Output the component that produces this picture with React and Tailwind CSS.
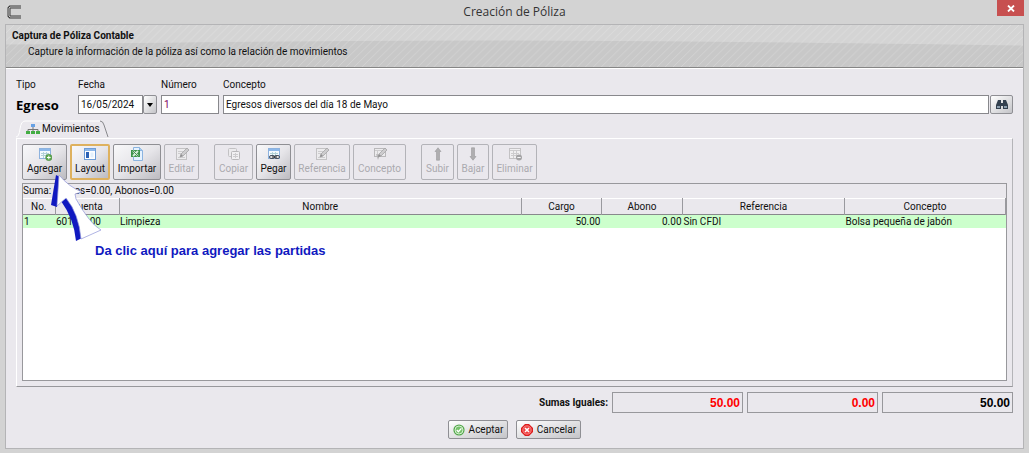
import { clsx } from 'clsx';

const COLUMNS = [
    { name: 'No.', width: 'w-[32px]' },
    { name: 'Cuenta', width: 'w-[64px]' },
    { name: 'Nombre', width: '' },
    { name: 'Cargo', width: 'w-[80px]', right: true },
    { name: 'Abono', width: 'w-[81px]', right: true },
    { name: 'Referencia', width: 'w-[162px]' },
    { name: 'Concepto', width: 'w-[161px]' },
];

const ROWS = [['1', '601-00-00', 'Limpieza', '50.00', '0.00', 'Sin CFDI', 'Bolsa pequeña de jabón']];

function SheetShape() {
    return (
        <>
            <rect x="1.5" y="1.5" width="11" height="10" fill="#f4faff" stroke="#8db2de" />
            <path d="M2 2h10v2H2z" fill="#8db8ea" />
            <path d="M3 6.5h8M3 8.5h8M5.5 5v6M8.5 5v6" stroke="#b3d3d8" />
        </>
    );
}

function PencilShape() {
    return (
        <>
            <path d="M5 10l1-3 6-6 2 2-6 6z" fill="#bbb" stroke="#777" strokeWidth=".8" />
            <path d="M5 10l1-3 2 2z" fill="#555" />
        </>
    );
}

function ToolIcon({ name }) {
    const shapes = {
        add: (
            <>
                <SheetShape />
                <circle cx="10.8" cy="10.5" r="3.2" fill="#5da84f" stroke="#4c8a44" strokeWidth=".5" />
                <path d="M9 10.5h3.6M10.8 8.7v3.6" stroke="#fff" />
            </>
        ),
        layout: (
            <>
                <rect x="1.5" y="1.5" width="11" height="11" fill="#fff" stroke="#6f9dd6" />
                <path d="M2 2h10v2H2z" fill="#8db8ea" />
                <path d="M3 5h3v6H3z" fill="#2d62b5" />
                <path d="M7.5 5.5h3v5h-3z" fill="#e3f0fd" />
            </>
        ),
        excel: (
            <>
                <path d="M3.5.5h6l3 3v10h-9z" fill="#e5f2ff" stroke="#8bb4e0" />
                <path d="M9.5.5v3h3" fill="#a6caef" stroke="#8bb4e0" />
                <path d="M1 3h9v7H1z" fill="#3f944c" />
                <path d="M3 4l5 5M8 4L3 9" stroke="#d9f0dc" strokeWidth="1.8" />
                <path d="M3 4l5 5" stroke="#24752f" strokeWidth=".8" />
            </>
        ),
        edit: (
            <>
                <rect x="1.5" y="1.5" width="10" height="11" fill="#eee" stroke="#aaa" />
                <path d="M3 4.5h5M3 6.5h4M3 10.5h7" stroke="#bbb" />
                <PencilShape />
            </>
        ),
        copy: (
            <>
                <rect x="1.5" y="1.5" width="8" height="8" rx="1" fill="#eee" stroke="#aaa" />
                <rect x="4.5" y="4.5" width="8" height="8" rx="1" fill="#f6f6f6" stroke="#999" />
                <path d="M6 7.5h5M6 9.5h5M8.5 6v5" stroke="#bbb" />
            </>
        ),
        paste: (
            <>
                <SheetShape />
                <rect x="2.5" y="8.5" width="5" height="3" rx="1.5" fill="#ddd" stroke="#465263" />
                <rect x="7.5" y="8.5" width="5" height="3" rx="1.5" fill="#ddd" stroke="#465263" />
                <path d="M5 10h5" stroke="#222" />
            </>
        ),
        concept: (
            <>
                <rect x="1.5" y="1.5" width="11" height="8" fill="#eee" stroke="#999" />
                <path d="M2 3.5h10M4.5 3v6" stroke="#bbb" />
                <path d="M3 7l2 6 2-5z" fill="#999" />
                <PencilShape />
            </>
        ),
        up: <path d="M7 .8l3 3.7H8.5v8.7h-3V4.5H4z" fill="#888" stroke="#666" strokeWidth=".6" />,
        down: <path d="M7 13.2l3-3.7H8.5V.8h-3v8.7H4z" fill="#888" stroke="#666" strokeWidth=".6" />,
        remove: (
            <>
                <rect x="1.5" y="1.5" width="11" height="10" fill="#f5f5f5" stroke="#aaa" />
                <path d="M2 3.5h10M3 6.5h8M3 8.5h8M5.5 4v7M8.5 4v7" stroke="#bbb" />
                <circle cx="11" cy="10.5" r="3" fill="#777" />
                <path d="M9.3 10.5h3.4" stroke="#fff" />
            </>
        ),
    };
    return (
        <svg viewBox="0 0 14 14" className="size-3.5" aria-hidden="true">
            {shapes[name]}
        </svg>
    );
}

function ToolButton({ icon, label, width, active, disabled }) {
    return (
        <button
            type="button"
            disabled={disabled}
            className={clsx(
                'flex h-9 shrink-0 flex-col items-center justify-between rounded-[2px] border',
                width,
                disabled && 'border-[#b3b3b8] py-0.5 text-[#aaaaaf]',
                !disabled && 'bg-linear-to-br from-[#f8f8fa] via-[#e6e5e9] to-[#bcbbc0]',
                !disabled && (active ? 'border-2 border-[#deb15e] py-px' : 'border-[#8f8f94] py-0.5')
            )}
        >
            <span className={clsx('h-3.5', disabled && 'opacity-60')}>
                <ToolIcon name={icon} />
            </span>
            <span className="leading-4">{label}</span>
        </button>
    );
}

function Field({ id, label, width, value, className }) {
    return (
        <div className={clsx('flex flex-col gap-0.5', width)}>
            <label htmlFor={id} className="leading-4">{label}</label>
            <input
                id={id}
                defaultValue={value}
                className={clsx('h-[19px] w-full border border-[#88888c] bg-white px-0.5 outline-none', className)}
            />
        </div>
    );
}

function Total({ label, value, className }) {
    return (
        <output
            aria-label={label}
            className={clsx(
                'flex h-[21px] w-[131px] items-center justify-end border border-[#98989c] px-0.5 font-["Liberation_Sans"] text-[12px] font-bold',
                className
            )}
        >
            {value}
        </output>
    );
}

function TitleBar() {
    return (
        <header className="flex h-6 items-start px-[5px]">
            <div className="w-[27px] pt-[5px] pl-0.5">
                <svg viewBox="0 0 15 14" className="h-3.5 w-[15px]" aria-hidden="true">
                    <path d="M14 2H3L2 3v8l1 1h11" fill="none" stroke="#3c3c3c" strokeWidth="3" />
                    <path d="M14 2H3L2 3v8l1 1h11" fill="none" stroke="#ccc" />
                </svg>
            </div>
            <h1 className="flex-1 text-center font-['Open_Sans'] text-[12px] leading-6 text-[#333]">Creación de Póliza</h1>
            <button type="button" aria-label="Cerrar" className="flex h-4 w-[27px] items-center justify-center bg-[#c75050]">
                <svg viewBox="0 0 8 7" className="h-[7px] w-2" aria-hidden="true">
                    <path d="M1 .5l6 6M7 .5l-6 6" stroke="#fff" strokeWidth="1.8" />
                </svg>
            </button>
        </header>
    );
}

function Banner() {
    return (
        <div className="relative h-[43px] border-b border-[#858585] bg-[#c8c8c8]">
            <svg viewBox="0 0 1020 43" preserveAspectRatio="none" className="absolute inset-0 size-full" aria-hidden="true">
                <defs>
                    <pattern id="stripes" width="8" height="8" patternUnits="userSpaceOnUse">
                        <path d="M-2 10L10-2M-2 2L2-2M6 10l4-4" stroke="#fff" strokeOpacity=".2" />
                    </pattern>
                </defs>
                <path d="M0 0h1020v21Q760 17 560 16T0 20z" fill="#d4d4d4" />
                <path d="M0 0h1020v43H0z" fill="url(#stripes)" />
            </svg>
            <div className="relative pt-[3px] pl-1.5">
                <h2 className="leading-4 font-bold">Captura de Póliza Contable</h2>
                <p className="pl-4 leading-4">Capture la información de la póliza así como la relación de movimientos</p>
            </div>
        </div>
    );
}

function MovementsTable() {
    return (
        <table className="w-full table-fixed border-collapse">
            <thead>
                <tr className="h-4 border-b border-[#88888c] bg-[#eae8ed]">
                    {COLUMNS.map((col) => (
                        <th key={col.name} className={clsx('border-t border-r border-t-white border-r-[#99999e] p-0 leading-[15px] font-normal', col.width)}>
                            {col.name}
                        </th>
                    ))}
                </tr>
            </thead>
            <tbody>
                {ROWS.map((row) => (
                    <tr key={row[0]} className="h-[13px] bg-[#ccffcc]">
                        {row.map((cell, i) => (
                            <td key={COLUMNS[i].name} className={clsx('px-px py-0 leading-[13px] whitespace-nowrap', COLUMNS[i].right && 'text-right')}>
                                {cell}
                            </td>
                        ))}
                    </tr>
                ))}
            </tbody>
        </table>
    );
}

function Pointer() {
    return (
        <div className="pointer-events-none absolute top-[35px] left-[33px]">
            <svg viewBox="0 0 52 68" className="h-[68px] w-[52px]" aria-hidden="true">
                <path d="M6 1L1 31l6 2L10 3zM11 27l6-3q12 17 15 40l-6 3Q24 45 11 27z" fill="#1019c0" />
                <path
                    d="M9 1L7 32l9-8q13 16 15 41l20-9Q40 50 26 25l-1-5 7-2Q19 13 9 1z"
                    fill="#fff"
                    stroke="#8e93d8"
                    strokeWidth=".7"
                />
            </svg>
        </div>
    );
}

export default function App() {
    return (
        <div className="min-h-screen bg-[#d3d3d3] pb-1 font-[Roboto,sans-serif] text-[10px] text-[#111]">
            <TitleBar />
            <main className="mx-[5px] border border-[#b4b4b6] bg-[#eae8ed] pb-[9px]">
                <Banner />
                <form className="border-t border-white px-[10px]" onSubmit={(e) => e.preventDefault()}>
                    <div className="flex pt-2">
                        <div className="flex w-[62px] flex-col gap-0.5">
                            <span className="leading-4">Tipo</span>
                            <strong className="font-['Open_Sans'] text-[13px] leading-5 text-black">Egreso</strong>
                        </div>
                        <div className="flex items-start">
                            <Field id="fecha" label="Fecha" value="16/05/2024" width="w-[65px]" />
                            <button type="button" aria-label="Abrir calendario" className="mt-[18px] flex h-[19px] w-3.5 items-center justify-center rounded-[2px] border border-[#8f8f94] bg-linear-to-br from-white to-[#c4c4c8]">
                                <svg viewBox="0 0 6 4" className="h-1 w-1.5" aria-hidden="true">
                                    <path d="M0 0h6L3 4z" />
                                </svg>
                            </button>
                        </div>
                        <div className="ml-1 flex flex-1 items-start gap-1">
                            <Field id="numero" label="Número" value="1" width="w-[58px]" className="text-[#800060]" />
                            <Field id="concepto" label="Concepto" value="Egresos diversos del día 18 de Mayo" width="flex-1" />
                            <button type="button" aria-label="Buscar" className="-ml-[3px] mt-[18px] flex h-[19px] w-[23px] items-center justify-center rounded-[2px] border border-[#8f8f94] bg-linear-to-br from-white to-[#c4c4c8]">
                                <svg viewBox="0 0 12 11" className="h-[11px] w-3" aria-hidden="true">
                                    <path d="M2 1h3v3h2V1h3l2 5v4H7V7H5v3H0V6z" fill="#34414f" />
                                    <path d="M1 7h3v2H1zM8 7h3v2H8z" fill="#8da0b0" />
                                </svg>
                            </button>
                        </div>
                    </div>

                    <div className="mt-[5px] flex h-[18px]">
                        <div className="relative z-10 flex h-[18px] w-[94px] items-center">
                            <svg viewBox="0 0 94 18" className="absolute inset-0 size-full" aria-hidden="true">
                                <path d="M0 18q3 0 4-8t5-9h75q3 0 4 4l5 13" fill="#eae8ed" />
                                <path d="M0 17q3 0 4-8t5-8h75" fill="none" stroke="#fff" />
                                <path d="M84 1q3 0 4 4l4 12" fill="none" stroke="#88888c" />
                            </svg>
                            <svg viewBox="0 0 14 12" className="relative ml-2.5 h-3 w-3.5" aria-hidden="true">
                                <path d="M7 4v3M2 9V6.5h10V9M7 6v3" fill="none" stroke="#777" />
                                <path d="M5 1h4v3H5z" fill="#68a2e5" />
                                <path d="M0 8h4v3H0zM5 8h4v3H5zM10 8h4v3h-4z" fill="#43ad43" />
                            </svg>
                            <span className="relative ml-0.5 leading-4">Movimientos</span>
                        </div>
                    </div>

                    <section className="relative border border-t-white border-r-[#b4b4b8] border-b-[#98989c] border-l-white p-[5px]">
                        <div className="flex gap-[15px]">
                            <div className="flex gap-[3px]">
                                <ToolButton icon="add" label="Agregar" width="w-[45px]" />
                                <ToolButton icon="layout" label="Layout" width="w-[40px]" active />
                                <ToolButton icon="excel" label="Importar" width="w-[48px]" />
                                <ToolButton icon="edit" label="Editar" width="w-[35px]" disabled />
                            </div>
                            <div className="flex gap-[3px]">
                                <ToolButton icon="copy" label="Copiar" width="w-[39px]" disabled />
                                <ToolButton icon="paste" label="Pegar" width="w-[35px]" />
                                <ToolButton icon="edit" label="Referencia" width="w-[56px]" disabled />
                                <ToolButton icon="concept" label="Concepto" width="w-[53px]" disabled />
                            </div>
                            <div className="flex gap-[3px]">
                                <ToolButton icon="up" label="Subir" width="w-[33px]" disabled />
                                <ToolButton icon="down" label="Bajar" width="w-[32px]" disabled />
                                <ToolButton icon="remove" label="Eliminar" width="w-[45px]" disabled />
                            </div>
                        </div>
                        <div className="mt-[3px] min-h-[198px] border border-[#98989c] bg-white">
                            <p className="h-3.5 bg-[#eae8ed] leading-[14px]">Suma: Cargos=0.00, Abonos=0.00</p>
                            <MovementsTable />
                            <p className="mt-[15px] pl-[72px] font-['Liberation_Sans'] text-[13px] leading-4 font-bold text-[#1019c0]">
                                Da clic aquí para agregar las partidas
                            </p>
                        </div>
                        <Pointer />
                    </section>

                    <div className="mt-[5px] flex items-center justify-end gap-1">
                        <span className="font-bold">Sumas Iguales:</span>
                        <Total label="Cargo" value="50.00" className="text-[#ff0000]" />
                        <Total label="Abono" value="0.00" className="text-[#ff0000]" />
                        <Total label="Suma" value="50.00" className="text-black" />
                    </div>
                    <div className="mt-[7px] flex justify-center gap-2">
                        <button type="submit" className="flex h-[19px] w-[60px] items-center justify-center gap-1 rounded-[2px] border border-[#8f8f94] bg-linear-to-br from-white to-[#c4c4c8]">
                            <svg viewBox="0 0 12 12" className="size-3" aria-hidden="true">
                                <circle cx="6" cy="6" r="5.6" fill="#55a84d" />
                                <circle cx="6" cy="6" r="4" fill="#76c26b" stroke="#d4efd0" />
                                <path d="M3.8 6l1.6 1.8L8.4 4.4" fill="none" stroke="#fff" strokeWidth="1.4" />
                            </svg>
                            Aceptar
                        </button>
                        <button type="button" className="flex h-[19px] w-[65px] items-center justify-center gap-1 rounded-[2px] border border-[#8f8f94] bg-linear-to-br from-white to-[#c4c4c8]">
                            <svg viewBox="0 0 12 12" className="size-3" aria-hidden="true">
                                <path d="M4 0h4l4 4v4l-4 4H4L0 8V4z" fill="#dc1c1c" />
                                <circle cx="6" cy="6" r="4.2" fill="#ef3c3c" stroke="#ffb0b0" strokeWidth=".7" />
                                <path d="M4 4l4 4M8 4L4 8" stroke="#fff" strokeWidth="1.6" />
                            </svg>
                            Cancelar
                        </button>
                    </div>
                </form>
            </main>
        </div>
    );
}
